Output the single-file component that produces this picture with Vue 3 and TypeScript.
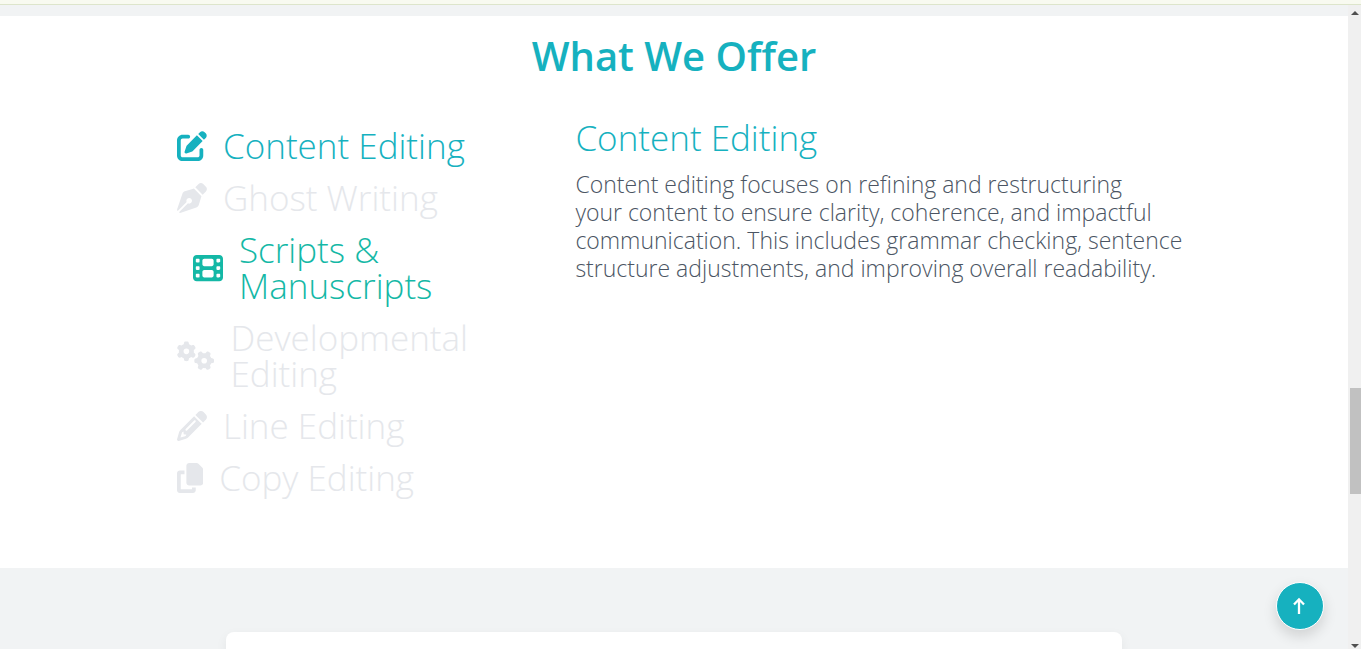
<script setup lang="ts">
import { ref, computed } from 'vue'

interface Service {
  name: string
  description: string
  width: number
  paths: string[]
}

const gear =
  'M308.5 135.3c7.1-6.3 9.9-16.2 6.2-25c-2.3-5.3-4.8-10.5-7.6-15.5L304 89.4c-3-5-6.3-9.9-9.8-14.6c-5.7-7.6-15.7-10.1-24.7-7.1l-28.2 9.3c-10.7-8.8-23-16-36.2-20.9L199 27.1c-1.9-9.3-9.1-16.7-18.5-17.8C173.9 8.4 167.2 8 160.4 8h-.7c-6.8 0-13.5 .4-20.1 1.2c-9.4 1.1-16.6 8.6-18.5 17.8L115 56.1c-13.3 5-25.5 12.1-36.2 20.9L50.5 67.8c-9-3-19-.5-24.7 7.1c-3.5 4.7-6.8 9.6-9.9 14.6l-3 5.3c-2.8 5-5.3 10.2-7.6 15.6c-3.7 8.7-.9 18.6 6.2 25l22.2 19.8C32.6 161.9 32 168.9 32 176s.6 14.1 1.7 20.9L11.5 216.7c-7.1 6.3-9.9 16.2-6.2 25c2.3 5.3 4.8 10.5 7.6 15.6l3 5.2c3 5.1 6.3 9.9 9.9 14.6c5.7 7.6 15.7 10.1 24.7 7.1l28.2-9.3c10.7 8.8 23 16 36.2 20.9l6.1 29.1c1.9 9.3 9.1 16.7 18.5 17.8c6.7 .8 13.5 1.2 20.4 1.2s13.7-.4 20.4-1.2c9.4-1.1 16.6-8.6 18.5-17.8l6.1-29.1c13.3-5 25.5-12.1 36.2-20.9l28.2 9.3c9 3 19 .5 24.7-7.1c3.5-4.7 6.8-9.5 9.8-14.6l3.1-5.4c2.8-5 5.3-10.2 7.6-15.5c3.7-8.7 .9-18.6-6.2-25l-22.2-19.8c1.1-6.8 1.7-13.8 1.7-20.9s-.6-14.1-1.7-20.9l22.2-19.8zM112 176a48 48 0 1 1 96 0 48 48 0 1 1 -96 0z'

const services: Service[] = [
  {
    name: 'Content Editing',
    description: [
      'Content editing focuses on refining and restructuring',
      'your content to ensure clarity, coherence, and impactful',
      'communication. This includes grammar checking, sentence',
      'structure adjustments, and improving overall readability.',
    ].join('\n'),
    width: 512,
    paths: [
      'M471.6 21.7c-21.9-21.9-57.3-21.9-79.2 0L362.3 51.7l97.9 97.9 30.1-30.1c21.9-21.9 21.9-57.3 0-79.2L471.6 21.7zm-299.2 220c-6.1 6.1-10.8 13.6-13.5 21.9l-29.6 88.8c-2.9 8.6-.6 18.1 5.8 24.6s15.9 8.7 24.6 5.8l88.8-29.6c8.2-2.7 15.7-7.4 21.9-13.5L437.7 172.3 339.7 74.3 172.4 241.7zM96 64C43 64 0 107 0 160V416c0 53 43 96 96 96H352c53 0 96-43 96-96V320c0-17.7-14.3-32-32-32s-32 14.3-32 32v96c0 17.7-14.3 32-32 32H96c-17.7 0-32-14.3-32-32V160c0-17.7 14.3-32 32-32h96c17.7 0 32-14.3 32-32s-14.3-32-32-32H96z',
    ],
  },
  {
    name: 'Ghost Writing',
    description: '',
    width: 512,
    paths: [
      'M368.4 18.3L312.7 74.1 437.9 199.3l55.7-55.7c21.9-21.9 21.9-57.3 0-79.2L447.6 18.3c-21.9-21.9-57.3-21.9-79.2 0zM288 94.6l-9.2 2.8L134.7 140.6c-19.9 6-35.7 21.2-42.3 41L3.8 445.8c-3.8 11.3-1 23.9 7.3 32.4L164.7 324.7c-3-6.3-4.7-13.3-4.7-20.7c0-26.5 21.5-48 48-48s48 21.5 48 48s-21.5 48-48 48c-7.4 0-14.4-1.7-20.7-4.7L33.7 500.9c8.6 8.3 21.1 11.2 32.4 7.3l264.3-88.6c19.7-6.6 35-22.4 41-42.3l43.2-144.1 2.8-9.2L288 94.6z',
    ],
  },
  {
    name: 'Scripts & Manuscripts',
    description: '',
    width: 512,
    paths: [
      'M0 96C0 60.7 28.7 32 64 32H448c35.3 0 64 28.7 64 64V416c0 35.3-28.7 64-64 64H64c-35.3 0-64-28.7-64-64V96zM48 368v32c0 8.8 7.2 16 16 16H96c8.8 0 16-7.2 16-16V368c0-8.8-7.2-16-16-16H64c-8.8 0-16 7.2-16 16zm368-16c-8.8 0-16 7.2-16 16v32c0 8.8 7.2 16 16 16h32c8.8 0 16-7.2 16-16V368c0-8.8-7.2-16-16-16H416zM48 240v32c0 8.8 7.2 16 16 16H96c8.8 0 16-7.2 16-16V240c0-8.8-7.2-16-16-16H64c-8.8 0-16 7.2-16 16zm368-16c-8.8 0-16 7.2-16 16v32c0 8.8 7.2 16 16 16h32c8.8 0 16-7.2 16-16V240c0-8.8-7.2-16-16-16H416zM48 112v32c0 8.8 7.2 16 16 16H96c8.8 0 16-7.2 16-16V112c0-8.8-7.2-16-16-16H64c-8.8 0-16 7.2-16 16zM416 96c-8.8 0-16 7.2-16 16v32c0 8.8 7.2 16 16 16h32c8.8 0 16-7.2 16-16V112c0-8.8-7.2-16-16-16H416zM160 128v64c0 17.7 14.3 32 32 32H320c17.7 0 32-14.3 32-32V128c0-17.7-14.3-32-32-32H192c-17.7 0-32 14.3-32 32zm32 160c-17.7 0-32 14.3-32 32v64c0 17.7 14.3 32 32 32H320c17.7 0 32-14.3 32-32V320c0-17.7-14.3-32-32-32H192z',
    ],
  },
  { name: 'Developmental Editing', description: '', width: 640, paths: [gear, gear] },
  {
    name: 'Line Editing',
    description: '',
    width: 512,
    paths: [
      'M410.3 231l11.3-11.3-33.9-33.9-62.1-62.1L291.7 89.8l-11.3 11.3-22.6 22.6L58.6 322.9c-10.4 10.4-18 23.3-22.2 37.4L1 480.7c-2.5 8.4-.2 17.5 6.1 23.7s15.3 8.5 23.7 6.1l120.3-35.4c14.1-4.2 27-11.8 37.4-22.2L387.7 253.7 410.3 231zM160 399.4l-9.1 22.7c-4 3.1-8.5 5.4-13.3 6.9L59.4 452l23-78.1c1.4-4.9 3.8-9.4 6.9-13.3l22.7-9.1v32c0 8.8 7.2 16 16 16h32zM362.7 18.7L348.3 33.2 325.7 55.8 314.3 67.1l33.9 33.9 62.1 62.1 33.9 33.9 11.3-11.3 22.6-22.6 14.5-14.5c25-25 25-65.5 0-90.5L453.3 18.7c-25-25-65.5-25-90.5 0zm-47.4 168l-144 144c-6.2 6.2-16.4 6.2-22.6 0s-6.2-16.4 0-22.6l144-144c6.2-6.2 16.4-6.2 22.6 0s6.2 16.4 0 22.6z',
    ],
  },
  {
    name: 'Copy Editing',
    description: '',
    width: 448,
    paths: [
      'M208 0H332.1c12.7 0 24.9 5.1 33.9 14.1l67.9 67.9c9 9 14.1 21.2 14.1 33.9V336c0 26.5-21.5 48-48 48H208c-26.5 0-48-21.5-48-48V48c0-26.5 21.5-48 48-48zM48 128h80v64H64V448H256V416h64v48c0 26.5-21.5 48-48 48H48c-26.5 0-48-21.5-48-48V176c0-26.5 21.5-48 48-48z',
    ],
  },
]

const selected = ref(0)
const highlighted = ref(2)
const current = computed(() => services[selected.value])
</script>

<template>
  <div class="page">
    <div class="topbar"></div>
    <div class="viewport">
      <main class="content">
        <section class="offer">
          <h2 class="title">What We Offer</h2>
          <div class="columns">
            <ul class="services">
              <li v-for="(service, i) in services" :key="service.name">
                <button
                  type="button"
                  class="service"
                  :class="{ active: i === selected, highlighted: i === highlighted }"
                  @click="selected = i"
                  @mouseenter="highlighted = i"
                >
                  <svg class="icon" :viewBox="`0 0 ${service.width} 512`" aria-hidden="true">
                    <path
                      v-for="(d, n) in service.paths"
                      :key="n"
                      :d="d"
                      :transform="n === 1 ? 'translate(464 336) rotate(90) translate(-160 -176)' : undefined"
                      fill="currentColor"
                    />
                  </svg>
                  <span>{{ service.name }}</span>
                </button>
              </li>
            </ul>
            <article class="detail">
              <h3>{{ current.name }}</h3>
              <p>{{ current.description }}</p>
            </article>
          </div>
        </section>
        <section class="next">
          <div class="card"></div>
        </section>
      </main>
      <div class="scrollbar" aria-hidden="true">
        <svg class="arrow" viewBox="0 0 13 13"><path d="M3 10h8L7 6z" fill="#505050" /></svg>
        <div class="track"><div class="thumb"></div></div>
        <svg class="arrow" viewBox="0 0 13 13"><path d="M3 8h8L7 12z" fill="#505050" /></svg>
      </div>
    </div>
    <button type="button" class="to-top" aria-label="Back to top">
      <svg viewBox="0 0 20 20" fill="none" stroke="currentColor" stroke-width="2.300">
        <path d="M9 18V3.500M4 8.500l5-5.200 5 5.200" />
      </svg>
    </button>
  </div>
</template>

<style>
body {
  margin: 0;
}
</style>

<style scoped>
.page {
  display: flex;
  flex-direction: column;
  height: 100vh;
  overflow: hidden;
  font-family: Papyrus, 'Open Sans', sans-serif;
  font-weight: 300;
  background: #f1f3f4;
}
.topbar {
  flex: none;
  height: 4px;
  background: #f8faf0;
  border-bottom: 1px solid #dde5cb;
}
.viewport {
  flex: 1;
  min-height: 0;
  display: flex;
}
.content {
  flex: 1;
  padding-top: 11px;
  overflow: hidden;
}
.offer {
  background: #fff;
  padding: 20px 16px 72px;
}
.title {
  margin: 0 0 44px;
  text-align: center;
  font-size: 40px;
  line-height: 40px;
  font-weight: 600;
  color: #16b1bf;
}
.columns {
  display: grid;
  grid-template-columns: 2fr 3fr;
  max-width: 996px;
  padding-left: 2px;
  margin: 0 auto;
}
.services {
  list-style: none;
  margin: 0;
  padding: 8px 0 0;
  display: flex;
  flex-direction: column;
  gap: 16px;
  max-width: 304px;
}
.service {
  display: flex;
  align-items: center;
  gap: 16px;
  width: 100%;
  padding: 0;
  border: 0;
  background: none;
  color: #e5e7eb;
  font: inherit;
  font-size: 35px;
  line-height: 36px;
  text-align: left;
  cursor: pointer;
}
.service.highlighted {
  padding-left: 16px;
  color: #14b8a6;
}
.service.active {
  color: #16b1bf;
}
.icon {
  flex: none;
  height: 30px;
}
.detail {
  margin-right: -24px;
}
.detail h3 {
  margin: 0 0 14px;
  font-size: 35px;
  line-height: 36px;
  font-weight: 300;
  color: #16b1bf;
}
.detail p {
  margin: 0;
  font-size: 23px;
  line-height: 28px;
  white-space: pre-line;
  color: #4b5563;
}
.next {
  padding: 64px 16px;
}
.card {
  max-width: 896px;
  height: 320px;
  margin: 0 auto;
  border-radius: 8px;
  background: #fff;
  box-shadow: 0 4px 12px rgba(0, 0, 0, 0.06);
}
.scrollbar {
  flex: none;
  display: flex;
  flex-direction: column;
  width: 13px;
  background: #f0f0f0;
}
.arrow {
  flex: none;
  height: 13px;
}
.track {
  flex: 1;
  padding-left: 2px;
  display: grid;
  grid-template-rows: 370fr 106fr 142fr;
}
.thumb {
  grid-row: 2;
  background: #c1c1c1;
}
.to-top {
  position: fixed;
  right: 37px;
  bottom: 19px;
  width: 48px;
  height: 48px;
  display: grid;
  place-items: center;
  padding: 0;
  border: 1px solid #fff;
  border-radius: 50%;
  background: #16b1bf;
  color: #fff;
  box-shadow: 0 6px 14px rgba(0, 0, 0, 0.14);
  cursor: pointer;
}
.to-top svg {
  width: 20px;
  height: 20px;
}
</style>
